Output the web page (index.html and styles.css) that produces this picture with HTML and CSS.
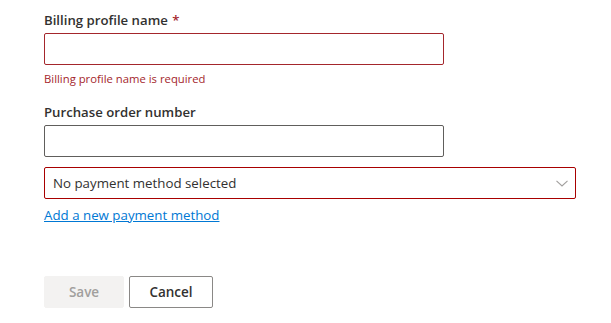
FILE: index.html
```html
<!DOCTYPE html>
<html lang="en">
<head>
    <meta charset="UTF-8">
    <title>Billing profile</title>
    <link rel="stylesheet" href="styles.css">
</head>
<body>
    <form class="profile-form">
        <div class="field">
            <label class="field-label" for="profileName">Billing profile name <span class="required">*</span></label>
            <input class="text-input invalid" id="profileName" type="text">
            <div class="error-text">Billing profile name is required</div>
        </div>

        <div class="field">
            <label class="field-label" for="poNumber">Purchase order number</label>
            <input class="text-input" id="poNumber" type="text">
        </div>

        <div class="dropdown">
            <span class="dropdown-title">No payment method selected</span>
            <svg class="caret" width="12" height="7" viewBox="0 0 12 7">
                <path d="M0.5 0.8 L6 6 L11.5 0.8" fill="none" stroke="#a19f9d" stroke-width="1.1"/>
            </svg>
        </div>
        <a class="add-link" href="#">Add a new payment method</a>

        <div class="actions">
            <button class="btn btn-primary" type="button" disabled>Save</button>
            <button class="btn btn-default" type="button">Cancel</button>
        </div>
    </form>
</body>
</html>
```

FILE: styles.css
```css
/* page */
body {
    margin: 0;
    background: #ffffff;
    font-family: "Open Sans", "Noto Sans", sans-serif;
    color: #323130;
}

.profile-form {
    padding: 10px 0 0 44px;
}

/* fields */
.field-label {
    display: block;
    font-size: 13.2px;
    font-weight: 600;
    line-height: 20px;
    margin-bottom: 3px;
    color: #323130;
}

.required {
    margin-left: 1px;
    color: #a4262c;
}

.text-input {
    display: block;
    width: 400px;
    height: 32px;
    margin: 0;
    padding: 0 8px;
    box-sizing: border-box;
    border: 1px solid #605e5c;
    border-radius: 2px;
    font-family: inherit;
    font-size: 14px;
    outline: none;
}

.text-input.invalid {
    border-color: #a4262c;
}

.error-text {
    margin-top: 6px;
    font-size: 11.3px;
    line-height: 16px;
    color: #a4262c;
}

.field + .field {
    margin-top: 15px;
}

/* payment dropdown */
.dropdown {
    display: flex;
    align-items: center;
    justify-content: space-between;
    width: 532px;
    height: 32px;
    margin-top: 10px;
    padding: 0 7px 0 8px;
    box-sizing: border-box;
    border: 1px solid #a80000;
    border-radius: 2px;
    font-size: 13.3px;
    color: #605e5c;
}

.dropdown-title {
    color: #323130;
}

.add-link {
    display: inline-block;
    margin-top: 6px;
    font-size: 13.3px;
    line-height: 20px;
    color: #0078d4;
    text-decoration: underline;
}

/* buttons */
.actions {
    display: flex;
    gap: 5px;
    margin-top: 51px;
}

.btn {
    height: 32px;
    padding: 0 16px;
    border-radius: 2px;
    font-family: inherit;
    font-size: 13.5px;
    font-weight: 600;
    cursor: pointer;
}

.btn-primary {
    width: 80px;
    border: 1px solid #f3f2f1;
    background: #f3f2f1;
    color: #a19f9d;
    cursor: default;
}

.btn-default {
    width: 84px;
    border: 1px solid #8a8886;
    background: #ffffff;
    color: #323130;
}
```
